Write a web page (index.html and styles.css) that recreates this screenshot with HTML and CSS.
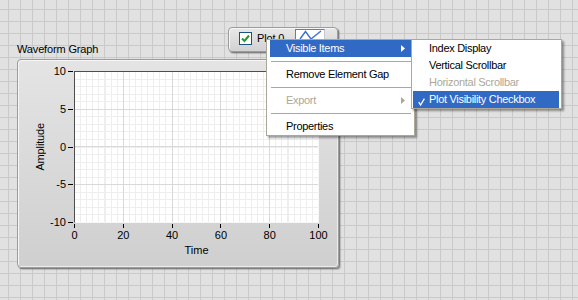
FILE: index.html
```html
<!DOCTYPE html>
<html>
<head>
<meta charset="utf-8">
<title>Waveform Graph</title>
<link rel="stylesheet" href="styles.css">
</head>
<body>
<div class="canvas">
  <div class="graph">
    <div class="graph-label">Waveform Graph</div>
    <div class="panel">
      <div class="y-title"><span>Amplitude</span></div>
      <div class="y-axis">
        <div class="y-tick"><span>10</span><i></i></div>
        <div class="y-tick"><span>5</span><i></i></div>
        <div class="y-tick"><span>0</span><i></i></div>
        <div class="y-tick"><span>-5</span><i></i></div>
        <div class="y-tick"><span>-10</span><i></i></div>
      </div>
      <div class="plot"></div>
      <div class="x-axis">
        <div class="x-tick"><i></i><span>0</span></div>
        <div class="x-tick"><i></i><span>20</span></div>
        <div class="x-tick"><i></i><span>40</span></div>
        <div class="x-tick"><i></i><span>60</span></div>
        <div class="x-tick"><i></i><span>80</span></div>
        <div class="x-tick"><i></i><span>100</span></div>
      </div>
      <div class="x-title">Time</div>
    </div>
  </div>

  <div class="legend">
    <div class="check">
      <svg width="9" height="9" viewBox="0 0 9 9"><path d="M1 4.5 L3.5 7 L8 1.5" fill="none" stroke="#1f9e2c" stroke-width="2"/></svg>
    </div>
    <div class="legend-name">Plot 0</div>
    <div class="swatch">
      <svg width="28" height="15" viewBox="0 0 28 15"><polyline points="4,9 9.5,1.5 15,9 25,1" fill="none" stroke="#3b6fd0" stroke-width="1.4"/></svg>
    </div>
  </div>

  <div class="menu">
    <div class="menu-item active">Visible Items<svg class="arrow" width="4" height="7" viewBox="0 0 4 7"><path d="M0 0 L4 3.5 L0 7 Z" fill="currentColor"/></svg></div>
    <div class="sep"></div>
    <div class="menu-item">Remove Element Gap</div>
    <div class="sep"></div>
    <div class="menu-item disabled">Export<svg class="arrow" width="4" height="7" viewBox="0 0 4 7"><path d="M0 0 L4 3.5 L0 7 Z" fill="currentColor"/></svg></div>
    <div class="sep"></div>
    <div class="menu-item">Properties</div>
  </div>

  <div class="submenu">
    <div class="sub-item"><span class="mark"></span>Index Display</div>
    <div class="sub-item"><span class="mark"></span>Vertical Scrollbar</div>
    <div class="sub-item disabled"><span class="mark"></span>Horizontal Scrollbar</div>
    <div class="sub-item active"><span class="mark"><svg width="7" height="8" viewBox="0 0 7 8"><path d="M0.7 4.2 L2.6 7 L6.4 0.6" fill="none" stroke="currentColor" stroke-width="1.3"/></svg></span>Plot Visibility Checkbox</div>
  </div>
</div>
</body>
</html>
```

FILE: styles.css
```css
* { box-sizing: border-box; }

html, body { margin: 0; padding: 0; }

body {
  width: 578px;
  height: 300px;
  overflow: hidden;
  background-color: #e1e1e1;
  background-image:
    linear-gradient(to right, #c9c9c9 1px, transparent 1px),
    linear-gradient(to bottom, #c9c9c9 1px, transparent 1px);
  background-size: 12px 12px;
  background-position: 8px 9px;
  font-family: "Liberation Sans", Arial, sans-serif;
  font-size: 11px;
  color: #000;
}

.canvas {
  position: relative;
  width: 578px;
  height: 300px;
  padding: 42px 0 0 17px;
}

.graph-label {
  line-height: 14px;
  margin-bottom: 3px;
  letter-spacing: -0.15px;
}

.panel {
  width: 322px;
  display: grid;
  grid-template-columns: 28px 28px 245px;
  grid-template-rows: 152px auto auto;
  padding: 11px 19px 11px 0;
  border: 1px solid #9c9c9c;
  border-radius: 4px;
  background: linear-gradient(#e4e4e4, #cfcfcf);
  box-shadow: inset 1px 1px 0 #f6f6f6, inset -1px -1px 0 #ececec, 1px 1px 0 #808080, 2px 2px 1px rgba(0, 0, 0, 0.18);
}

.y-title {
  grid-column: 1;
  grid-row: 1;
  display: flex;
  justify-content: flex-end;
  align-items: center;
}

.y-title span {
  writing-mode: vertical-rl;
  transform: rotate(180deg);
  line-height: 12px;
  letter-spacing: -0.15px;
}

.y-axis {
  grid-column: 2;
  grid-row: 1;
  margin: -6px 0;
  display: flex;
  flex-direction: column;
  justify-content: space-between;
}

.y-tick {
  height: 13px;
  display: flex;
  align-items: center;
  justify-content: flex-end;
  gap: 2px;
}

.y-tick span { line-height: 13px; }

.y-tick i {
  width: 5px;
  height: 1px;
  background: #000;
  margin-right: 1px;
}

.plot {
  grid-column: 3;
  grid-row: 1;
  border-top: 1px solid #4d4d4d;
  border-left: 1px solid #4d4d4d;
  border-right: 1px solid #f7f7f7;
  border-bottom: 1px solid #f7f7f7;
  background-color: #fff;
  background-origin: border-box;
  background-image:
    repeating-linear-gradient(to right, #d9d9d9 0 1px, transparent 1px 48.8px),
    repeating-linear-gradient(to bottom, #d9d9d9 0 1px, transparent 1px 37.75px),
    repeating-linear-gradient(to right, #eeeeee 0 1px, transparent 1px 6.1px),
    repeating-linear-gradient(to bottom, #eeeeee 0 1px, transparent 1px 7.55px);
}

.x-axis {
  grid-column: 3;
  grid-row: 2;
  margin: 0 -12px;
  display: flex;
  justify-content: space-between;
}

.x-tick {
  width: 25px;
  display: flex;
  flex-direction: column;
  align-items: center;
}

.x-tick i {
  width: 1px;
  height: 4px;
  background: #000;
  margin-top: 1px;
}

.x-tick span {
  line-height: 12px;
  margin-top: 1px;
}

.x-title {
  grid-column: 3;
  grid-row: 3;
  text-align: center;
  line-height: 12px;
  margin-top: 3px;
}

/* plot legend floating on the front panel */
.legend {
  position: absolute;
  left: 228px;
  top: 27px;
  width: 110px;
  height: 25px;
  border: 1px solid #9c9c9c;
  border-radius: 4px;
  background: linear-gradient(#e8e8e8, #d2d2d2);
  box-shadow: inset 1px 1px 0 #f6f6f6, 1px 1px 0 #808080, 2px 2px 1px rgba(0, 0, 0, 0.18);
  display: flex;
  align-items: flex-start;
  padding: 3px 0 0 10px;
}

.check {
  width: 13px;
  height: 13px;
  margin-top: 1px;
  border: 1px solid #1c5180;
  background: #fff;
  display: flex;
  align-items: center;
  justify-content: center;
}

.check svg { display: block; }

.legend-name {
  margin-left: 5px;
  line-height: 14px;
  letter-spacing: -0.15px;
}

.swatch {
  margin-left: 11px;
  margin-top: -2px;
  width: 30px;
  height: 17px;
  background: #fff;
  border: 1px solid;
  border-color: #7a7a7a #c8c8c8 #c8c8c8 #7a7a7a;
}

.swatch svg { display: block; }

/* context menus */
.menu,
.submenu {
  position: absolute;
  top: 39px;
  background: #fff;
  border: 1px solid #aca899;
  box-shadow: 2px 2px 2px rgba(0, 0, 0, 0.38);
  letter-spacing: -0.3px;
}

.menu {
  left: 266px;
  width: 149px;
  padding: 0 3px;
}

.submenu {
  left: 411px;
  width: 151px;
  padding: 0 2px 0 1px;
}

.menu-item,
.sub-item {
  height: 17px;
  line-height: 17px;
  display: flex;
  align-items: center;
  white-space: nowrap;
}

.menu-item { padding-left: 16px; }

.active {
  background: #316ac5;
  color: #fff;
}

.disabled { color: #aca899; }

.arrow {
  margin-left: auto;
  margin-right: 6px;
  display: block;
}

.sep {
  height: 1px;
  background: #aca899;
  margin: 4px 0 4px 1px;
}

.mark {
  width: 16px;
  height: 17px;
  display: flex;
  justify-content: center;
  align-items: center;
  padding-top: 4px;
}

.mark svg { display: block; }
```
